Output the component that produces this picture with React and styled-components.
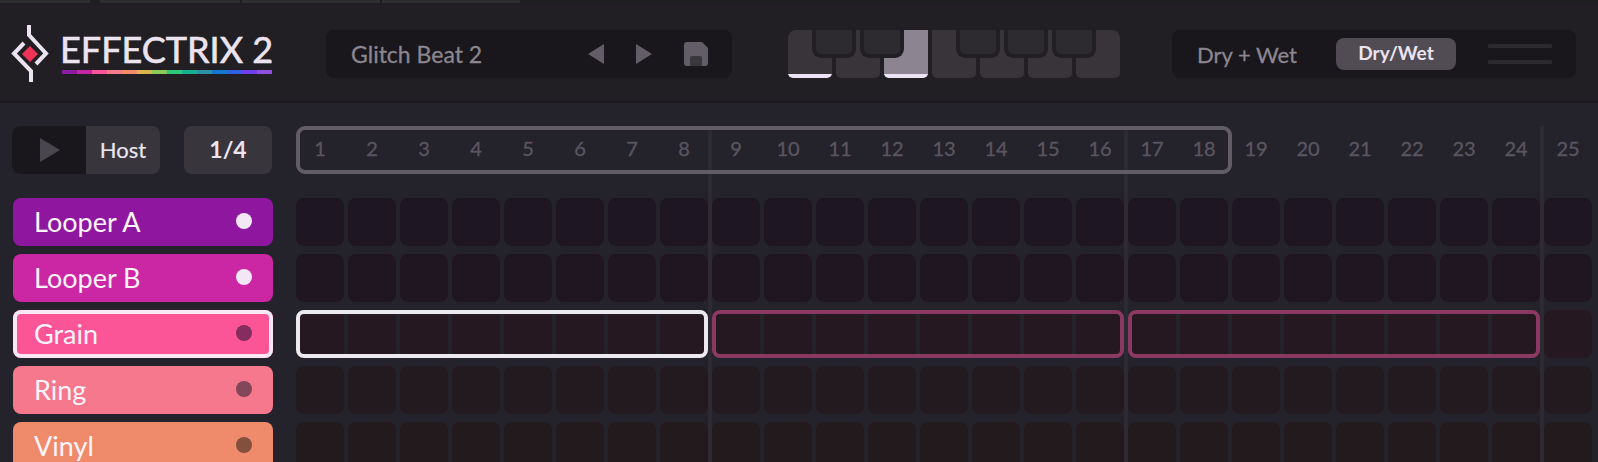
import React from "react";
import styled, { createGlobalStyle } from "styled-components";

const FONT = `Lato, "Open Sans", sans-serif`;

const tracks = [
  { name: "Looper A", color: "#8f17a0", cell: "#1e1622", dot: "#f2e8f5" },
  { name: "Looper B", color: "#cb26a4", cell: "#201622", dot: "#f2e8f5" },
  { name: "Grain", color: "#fb5598", cell: "#251821", dot: "#842d5e", selected: true },
  { name: "Ring", color: "#f5788c", cell: "#231a1f", dot: "#824759" },
  { name: "Vinyl", color: "#ef8b6b", cell: "#231a1d", dot: "#82503d" },
];

const rainbow = [
  "#8a1ca0", "#c826a0", "#f9549a", "#f57a8e", "#f08c6c", "#dcb44e", "#8cc85a",
  "#2ec878", "#14b090", "#3090a8", "#1478d0", "#3060e0", "#7040f0", "#9050e0",
];

const whiteKeys = [true, false, true, false, false, false, false];
const blackKeys = [24, 72, 168, 216, 264];
const beats = [412, 828, 1244];
const topTabs = [90, 140, 138, 138];
const STEPS = Array.from({ length: 25 }, (_, i) => i + 1);

const Global = createGlobalStyle`
  html, body { margin: 0; padding: 0; background: #24222a; }
  body { font-family: ${FONT}; overflow: hidden; }
`;

const Page = styled.div`
  width: 1598px;
  height: 462px;
  overflow: hidden;
  background: #24222a;
`;

const TopStrip = styled.div`
  height: 4px;
  display: flex;
  background: #1f1f21;
  div { height: 3px; background: #2e2e30; margin-right: 2px; }
  div:first-child { margin-right: 10px; }
`;

const Header = styled.header`
  height: 99px;
  box-sizing: border-box;
  padding-top: 26px;
  display: flex;
  align-items: flex-start;
  background: #211f24;
  border-bottom: 2px solid #1b1a1e;
`;

const LogoBox = styled.div`
  width: 326px;
  height: 62px;
  flex: none;
  margin-top: -6px;
  display: flex;
`;

const LogoMark = styled.svg`
  width: 62px;
  height: 62px;
  flex: none;
`;

const LogoText = styled.div`
  width: 210px;
  padding-top: 6px;
`;

const Wordmark = styled.div`
  font-size: 36px;
  line-height: 38px;
  height: 38px;
  margin-left: -2px;
  font-weight: 400;
  color: #ebe4f0;
  white-space: nowrap;
  -webkit-text-stroke: 0.6px #ebe4f0;
`;

const Rainbow = styled.div`
  display: flex;
  height: 4px;
  margin-top: 2px;
`;

const RainbowPart = styled.span`
  flex: 1;
  background: ${(p) => p.$color};
`;

const Panel = styled.div`
  height: 48px;
  flex: none;
  display: flex;
  align-items: center;
  border-radius: 8px;
  background: #19171b;
`;

const PresetPanel = styled(Panel)`
  width: 406px;
  box-sizing: border-box;
  padding-left: 25px;
`;

const PanelLabel = styled.span`
  font-size: 22px;
  color: #8c8690;
  white-space: nowrap;
  -webkit-text-stroke: 0.3px #8c8690;
`;

const PresetName = styled(PanelLabel)`
  width: 237px;
  font-size: 23px;
`;

const NavIcon = styled.svg`
  width: 16px;
  height: 20px;
  fill: #625d66;
  margin-right: 32px;
`;

const SaveIcon = styled.svg`
  width: 24px;
  height: 24px;
`;

const Keyboard = styled.div`
  position: relative;
  flex: none;
  width: 332px;
  height: 48px;
  margin-left: 56px;
  display: flex;
  gap: 4px;
`;

const WhiteKey = styled.div`
  position: relative;
  flex: none;
  width: 44px;
  height: 48px;
  overflow: hidden;
  border-radius: 0 0 5px 5px;
  background: ${(p) => (p.$active ? "#8c8490" : "#38343a")};
  &:first-child { border-radius: 8px 0 5px 5px; }
  &:nth-child(7) { border-radius: 0 8px 5px 5px; }
`;

const KeyMark = styled.div`
  position: absolute;
  left: 0;
  right: 0;
  bottom: 0;
  height: 4px;
  background: #ece4f4;
`;

const BlackKey = styled.div`
  position: absolute;
  top: 0;
  left: ${(p) => p.$left}px;
  width: 36px;
  height: 24px;
  border: 4px solid #211f24;
  border-top: 0;
  border-radius: 0 0 9px 9px;
  background: #2e2b30;
`;

const MixPanel = styled(Panel)`
  width: 404px;
  margin-left: 52px;
  box-sizing: border-box;
  padding-left: 25px;
`;

const MixLabel = styled(PanelLabel)`
  width: 139px;
`;

const MixButton = styled.div`
  width: 120px;
  height: 32px;
  flex: none;
  border-radius: 8px;
  background: #514c54;
  color: #ebe4f0;
  font-size: 19px;
  font-weight: 700;
  line-height: 29px;
  text-align: center;
`;

const MenuLines = styled.div`
  width: 64px;
  height: 20px;
  margin-left: 32px;
  display: flex;
  flex-direction: column;
  justify-content: space-between;
  span { height: 4px; border-radius: 1px; background: #2c2a2f; }
`;

const Main = styled.main`
  position: relative;
  display: grid;
  grid-template-columns: 260px 1fr;
  column-gap: 24px;
  row-gap: 24px;
  padding: 23px 0 0 12px;
`;

const Controls = styled.div`
  display: flex;
  height: 48px;
`;

const PlayGroup = styled.div`
  display: flex;
  width: 148px;
  height: 48px;
  border-radius: 8px;
  overflow: hidden;
  background: #38353c;
`;

const PlayButton = styled.div`
  width: 74px;
  flex: none;
  display: flex;
  align-items: center;
  justify-content: center;
  background: #19171b;
  svg { width: 20px; height: 24px; fill: #4a464e; margin-left: 2px; }
`;

const HostLabel = styled.div`
  flex: 1;
  color: #ece5f0;
  font-size: 22px;
  line-height: 47px;
  text-align: center;
  -webkit-text-stroke: 0.2px #ece5f0;
`;

const RateButton = styled.div`
  width: 88px;
  height: 48px;
  margin-left: 24px;
  border-radius: 8px;
  background: #38353c;
  color: #ece5f0;
  font-size: 23px;
  font-weight: 700;
  line-height: 47px;
  text-align: center;
`;

const Timeline = styled.div`
  position: relative;
  z-index: 1;
  min-width: 0;
  overflow: hidden;
  margin-right: -2px;
`;

const StepGrid = styled.div`
  display: grid;
  grid-template-columns: repeat(25, 48px);
  grid-auto-rows: 48px;
  column-gap: 4px;
  height: 48px;
`;

const StepNumber = styled.div`
  grid-row: 1;
  color: #5a5560;
  font-size: 20px;
  line-height: 45px;
  text-align: center;
  -webkit-text-stroke: 0.35px #5a5560;
`;

const LoopRange = styled.div`
  grid-row: 1;
  grid-column: 1 / span 18;
  margin-right: -4px;
  border: 4px solid #625c68;
  border-radius: 9px;
`;

const BeatLine = styled.div`
  position: absolute;
  top: 23px;
  bottom: 0;
  left: ${(p) => p.$left}px;
  width: 4px;
  background: #2d2a33;
`;

const TrackList = styled.div`
  display: flex;
  flex-direction: column;
  gap: 8px;
  margin: 0 -1px 0 1px;
`;

const TrackLabel = styled.div`
  height: 48px;
  box-sizing: border-box;
  flex: none;
  display: flex;
  align-items: center;
  justify-content: space-between;
  padding: 0 21px 2px 21px;
  border-radius: 8px;
  background: ${(p) => p.$color};
  color: #fbf4fb;
  font-size: 27px;
  box-shadow: ${(p) => (p.$selected ? "inset 0 0 0 4px #f8e8f4" : "none")};
`;

const TrackDot = styled.span`
  width: 16px;
  height: 16px;
  border-radius: 50%;
  background: ${(p) => p.$color};
`;

const Rows = styled.div`
  display: flex;
  flex-direction: column;
  gap: 8px;
  height: 272px;
`;

const Cell = styled.div`
  grid-row: 1;
  border-radius: 8px;
  background: ${(p) => p.$color};
`;

const Segment = styled.div`
  grid-row: 1;
  grid-column: ${(p) => p.$start} / span 8;
  border: 4px solid ${(p) => (p.$active ? "#eceaee" : "#8a3a62")};
  border-radius: 8px;
  box-sizing: border-box;
`;

export default function App() {
  return (
    <Page>
      <Global />
      <TopStrip>
        {topTabs.map((w, i) => (
          <div key={i} style={{ width: w }} />
        ))}
      </TopStrip>
      <Header>
        <LogoBox>
          <LogoMark viewBox="0 0 62 62">
            <g fill="none" stroke="#ebe4f0" strokeWidth="4">
              <path d="M29 1 V11 L46 29.5 L36 40" />
              <path d="M24 19 L14 29.5 L31 47 V58" />
            </g>
            <path d="M30 22 L38 30 L30 38 L22 30 Z" fill="#ee3355" />
          </LogoMark>
          <LogoText>
            <Wordmark>EFFECTRIX 2</Wordmark>
            <Rainbow>
              {rainbow.map((c) => (
                <RainbowPart key={c} $color={c} />
              ))}
            </Rainbow>
          </LogoText>
        </LogoBox>
        <PresetPanel>
          <PresetName>Glitch Beat 2</PresetName>
          <NavIcon viewBox="0 0 16 20">
            <path d="M16 0 V20 L0 10 Z" />
          </NavIcon>
          <NavIcon viewBox="0 0 16 20">
            <path d="M0 0 V20 L16 10 Z" />
          </NavIcon>
          <SaveIcon viewBox="0 0 24 24">
            <path
              d="M3 0 H18 L24 6 V21 a3 3 0 0 1 -3 3 H3 a3 3 0 0 1 -3 -3 V3 a3 3 0 0 1 3 -3 Z"
              fill="#625d66"
            />
            <path d="M8 14 H16 a2 2 0 0 1 2 2 V24 H6 V16 a2 2 0 0 1 2 -2 Z" fill="#39363c" />
          </SaveIcon>
        </PresetPanel>
        <Keyboard>
          {whiteKeys.map((on, i) => (
            <WhiteKey key={i} $active={i === 2}>
              {on && <KeyMark />}
            </WhiteKey>
          ))}
          {blackKeys.map((left) => (
            <BlackKey key={left} $left={left} />
          ))}
        </Keyboard>
        <MixPanel>
          <MixLabel>Dry + Wet</MixLabel>
          <MixButton>Dry/Wet</MixButton>
          <MenuLines>
            <span />
            <span />
          </MenuLines>
        </MixPanel>
      </Header>
      <Main>
        <Controls>
          <PlayGroup>
            <PlayButton>
              <svg viewBox="0 0 20 24">
                <path d="M0 0 V24 L20 12 Z" />
              </svg>
            </PlayButton>
            <HostLabel>Host</HostLabel>
          </PlayGroup>
          <RateButton>1/4</RateButton>
        </Controls>
        <Timeline>
          <StepGrid>
            <LoopRange />
            {STEPS.map((n) => (
              <StepNumber key={n} style={{ gridColumn: n }}>
                {n}
              </StepNumber>
            ))}
          </StepGrid>
        </Timeline>
        <TrackList>
          {tracks.map((t) => (
            <TrackLabel key={t.name} $color={t.color} $selected={t.selected}>
              {t.name}
              <TrackDot $color={t.dot} />
            </TrackLabel>
          ))}
        </TrackList>
        <Rows>
          {tracks.map((t) => (
            <StepGrid key={t.name}>
              {STEPS.map((n) => (
                <Cell key={n} $color={t.cell} style={{ gridColumn: n }} />
              ))}
              {t.selected && (
                <>
                  <Segment $start={1} $active />
                  <Segment $start={9} />
                  <Segment $start={17} />
                </>
              )}
            </StepGrid>
          ))}
        </Rows>
        {beats.map((left) => (
          <BeatLine key={left} $left={left + 296} />
        ))}
      </Main>
    </Page>
  );
}
